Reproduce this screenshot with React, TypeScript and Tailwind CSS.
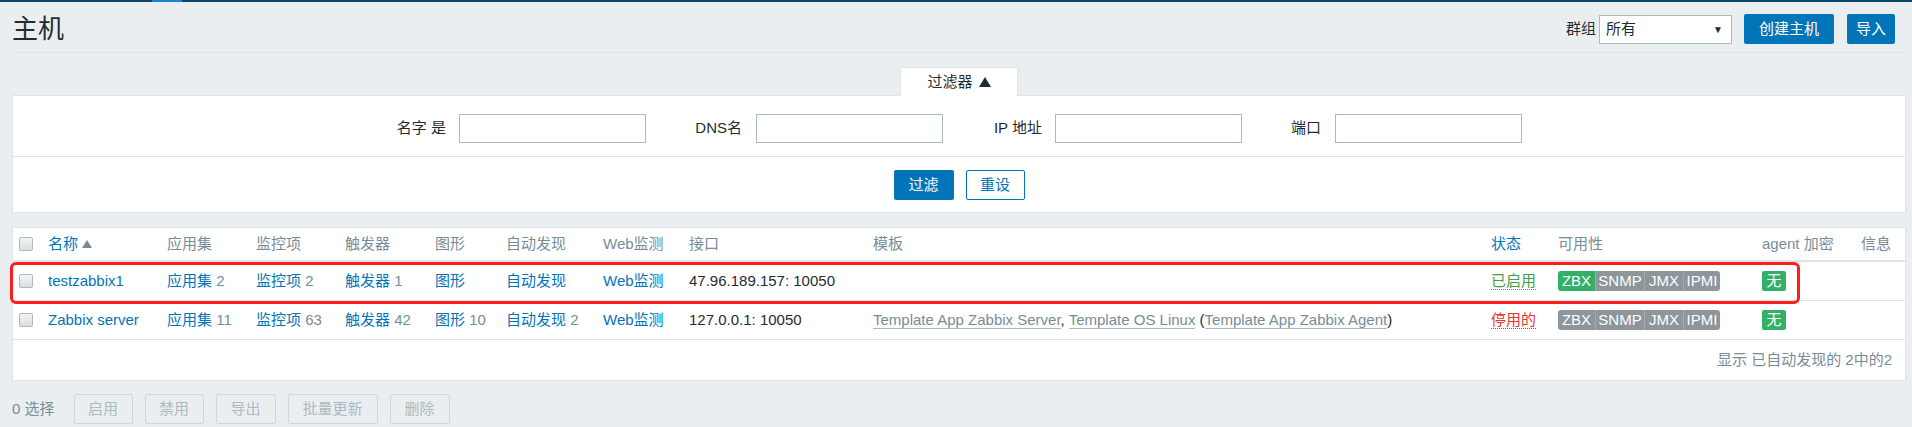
import React from "react";

const GRID =
  "grid grid-cols-[35px_119px_89px_89px_90px_71px_97px_86px_184px_618px_67px_204px_99px_44px] items-center";

function Checkbox() {
  return (
    <span className="block w-[14px] h-[14px] ml-[6px] rounded-[2px] border border-[#aeb8bd] bg-linear-to-b from-[#f2f4f5] to-[#dadfe2]" />
  );
}

function Link({ children }: { children: React.ReactNode }) {
  return <span className="text-[#0275b8]">{children}</span>;
}

function Cnt({ children }: { children: React.ReactNode }) {
  return <span className="text-[#768d99]"> {children}</span>;
}

function Badges({ zbxGreen }: { zbxGreen: boolean }) {
  return (
    <div className="flex h-[20px] text-white text-[15px] leading-[20px]">
      <span
        className={
          "w-[37px] text-center rounded-l-[3px] " +
          (zbxGreen ? "bg-[#34af67]" : "bg-[#8c969b]")
        }
      >
        ZBX
      </span>
      <span className="w-[49px] text-center bg-[#8c969b] border-l border-[#a2abb0]">SNMP</span>
      <span className="w-[39px] text-center bg-[#8c969b] border-l border-[#a2abb0]">JMX</span>
      <span className="w-[37px] text-center bg-[#8c969b] border-l border-[#a2abb0] rounded-r-[3px]">IPMI</span>
    </div>
  );
}

function NoBadge() {
  return (
    <span className="inline-block w-[24px] h-[20px] leading-[20px] text-center text-white bg-[#34af67] rounded-[2px] text-[15px]">
      无
    </span>
  );
}

export default function App() {
  return (
    <div className="min-h-[427px] w-[1912px] bg-[#ebeef0] text-[#1f2c33] text-[15px] font-['Liberation_Sans','Noto_Sans_CJK_SC',sans-serif] overflow-hidden">
      {/* top bar */}
      <div className="h-[2px] bg-[#0a466a] flex">
        <div className="ml-[152px] w-[30px] h-[2px] bg-[#1d86cc]" />
      </div>

      {/* header */}
      <div className="ml-[12px] mr-[6px] flex items-center justify-between pt-[12px] pb-[8px] border-b border-[#dfe4e7]">
        <h1 className="text-[26px] leading-[30px] text-[#1f2c33] font-normal">主机</h1>
        <div className="flex items-center mr-[11px]">
          <span className="mr-[3px] text-[#1f2c33]">群组</span>
          <div className="w-[133px] h-[29px] bg-white border border-[#acbbc2] flex items-center justify-between pl-[6px] pr-[8px]">
            <span>所有</span>
            <span className="text-[10px] text-[#1f2c33]">▼</span>
          </div>
          <button className="ml-[12px] w-[90px] h-[30px] bg-[#0275b8] text-white rounded-[2px]">创建主机</button>
          <button className="ml-[13px] w-[48px] h-[30px] bg-[#0275b8] text-white rounded-[2px]">导入</button>
        </div>
      </div>

      {/* filter */}
      <div className="ml-[12px] mr-[6px] mt-[14px]">
        <div className="flex justify-center">
          <div className="relative z-10 -mb-px w-[118px] h-[29px] bg-white border border-b-0 border-[#dfe4e7] rounded-t-[2px] flex items-center justify-center">
            <span>过滤器</span>
            <svg width="12" height="10" viewBox="0 0 12 10" className="ml-[6px]">
              <path d="M6 0 L12 10 L0 10 Z" fill="#1f2c33" />
            </svg>
          </div>
        </div>
        <div className="bg-white border border-[#dfe4e7]">
          <div className="pt-[18px] pl-[336px] flex items-center">
            <div className="w-[110px] pr-[13px] text-right">名字 是</div>
            <div className="w-[187px] h-[29px] border border-[#acbbc2] bg-white" />
            <div className="w-[110px] pr-[14px] text-right">DNS名</div>
            <div className="w-[187px] h-[29px] border border-[#acbbc2] bg-white" />
            <div className="w-[112px] pr-[13px] text-right">IP 地址</div>
            <div className="w-[187px] h-[29px] border border-[#acbbc2] bg-white" />
            <div className="w-[93px] pr-[14px] text-right">端口</div>
            <div className="w-[187px] h-[29px] border border-[#acbbc2] bg-white" />
          </div>
          <div className="mt-[13px] border-t border-[#dfe4e7] pt-[13px] pb-[12px] flex justify-center gap-[12px]">
            <button className="w-[60px] h-[30px] bg-[#0275b8] text-white rounded-[2px]">过滤</button>
            <button className="w-[59px] h-[30px] bg-white text-[#0275b8] border border-[#0275b8] rounded-[2px]">重设</button>
          </div>
        </div>
      </div>

      {/* table */}
      <div className="relative ml-[12px] mr-[6px] mt-[14px] bg-white border border-[#dfe4e7]">
        <div className={GRID + " h-[34px] border-b-2 border-[#dfe4e7] text-[#768d99]"}>
          <div><Checkbox /></div>
          <div className="flex items-center text-[#0275b8]">
            名称
            <svg width="10" height="8" viewBox="0 0 10 8" className="ml-[4px]">
              <path d="M5 0 L10 8 L0 8 Z" fill="#768d99" />
            </svg>
          </div>
          <div>应用集</div>
          <div>监控项</div>
          <div>触发器</div>
          <div>图形</div>
          <div>自动发现</div>
          <div>Web监测</div>
          <div>接口</div>
          <div>模板</div>
          <div className="text-[#0275b8]">状态</div>
          <div>可用性</div>
          <div>agent 加密</div>
          <div>信息</div>
        </div>

        <div className={GRID + " h-[39px] border-b border-[#dfe4e7]"}>
          <div><Checkbox /></div>
          <div><Link>testzabbix1</Link></div>
          <div><Link>应用集</Link><Cnt>2</Cnt></div>
          <div><Link>监控项</Link><Cnt>2</Cnt></div>
          <div><Link>触发器</Link><Cnt>1</Cnt></div>
          <div><Link>图形</Link></div>
          <div><Link>自动发现</Link></div>
          <div><Link>Web监测</Link></div>
          <div>47.96.189.157: 10050</div>
          <div></div>
          <div><span className="text-[#429e47] border-b border-dotted border-[#429e47] leading-[18px]">已启用</span></div>
          <div><Badges zbxGreen={true} /></div>
          <div><NoBadge /></div>
          <div></div>
        </div>

        <div className={GRID + " h-[39px] border-b border-[#dfe4e7]"}>
          <div><Checkbox /></div>
          <div><Link>Zabbix server</Link></div>
          <div><Link>应用集</Link><Cnt>11</Cnt></div>
          <div><Link>监控项</Link><Cnt>63</Cnt></div>
          <div><Link>触发器</Link><Cnt>42</Cnt></div>
          <div><Link>图形</Link><Cnt>10</Cnt></div>
          <div><Link>自动发现</Link><Cnt>2</Cnt></div>
          <div><Link>Web监测</Link></div>
          <div>127.0.0.1: 10050</div>
          <div className="whitespace-nowrap">
            <span className="text-[#768d99] border-b border-[#a9b9c1] leading-[18px]">Template App Zabbix Server</span>
            <span>, </span>
            <span className="text-[#768d99] border-b border-[#a9b9c1] leading-[18px]">Template OS Linux</span>
            <span> (</span>
            <span className="text-[#768d99] border-b border-[#a9b9c1] leading-[18px]">Template App Zabbix Agent</span>
            <span>)</span>
          </div>
          <div><span className="text-[#e33734] border-b border-dotted border-[#e33734] leading-[18px]">停用的</span></div>
          <div><Badges zbxGreen={false} /></div>
          <div><NoBadge /></div>
          <div></div>
        </div>

        <div className="h-[40px] flex items-center justify-end pr-[13px] text-[#768d99]">
          显示 已自动发现的 2中的2
        </div>

        {/* annotation overlay */}
        <div className="pointer-events-none absolute left-[-3px] top-[34px] w-[1790px] h-[42px] border-[3px] border-[#ff1c1c] rounded-[6px]" />
      </div>

      {/* bottom action bar */}
      <div className="ml-[12px] mt-[13px] flex items-center">
        <span className="text-[#768d99] mr-[19px]">0 选择</span>
        <div className="flex gap-[12px]">
          <button className="w-[59px] h-[30px] border border-[#cfd6da] text-[#acbbc2] rounded-[2px]">启用</button>
          <button className="w-[59px] h-[30px] border border-[#cfd6da] text-[#acbbc2] rounded-[2px]">禁用</button>
          <button className="w-[60px] h-[30px] border border-[#cfd6da] text-[#acbbc2] rounded-[2px]">导出</button>
          <button className="w-[90px] h-[30px] border border-[#cfd6da] text-[#acbbc2] rounded-[2px]">批量更新</button>
          <button className="w-[60px] h-[30px] border border-[#cfd6da] text-[#acbbc2] rounded-[2px]">删除</button>
        </div>
      </div>
    </div>
  );
}
